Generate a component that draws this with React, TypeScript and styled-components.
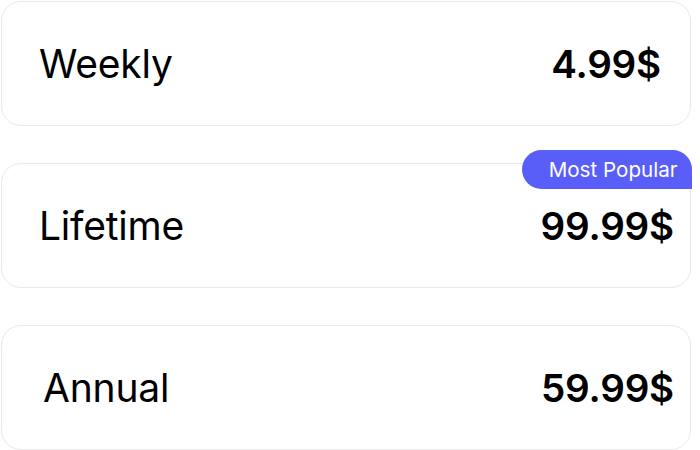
import React from 'react';
import styled, { createGlobalStyle } from 'styled-components';

interface Plan {
  name: string;
  price: string;
  badge?: string;
  padLeft: number;
  padRight: number;
}

const plans: Plan[] = [
  { name: 'Weekly', price: '4.99$', padLeft: 37, padRight: 29 },
  { name: 'Lifetime', price: '99.99$', badge: 'Most Popular', padLeft: 37, padRight: 16 },
  { name: 'Annual', price: '59.99$', padLeft: 41, padRight: 16 },
];

const GlobalStyle = createGlobalStyle`
  html, body {
    margin: 0;
    padding: 0;
    background: #ffffff;
  }
  body {
    font-family: Inter, "Noto Sans", sans-serif;
    color: #000000;
  }
`;

export default function App() {
  return (
    <>
      <GlobalStyle />
      <List>
        {plans.map((p) => (
          <Card key={p.name} $padLeft={p.padLeft} $padRight={p.padRight}>
            <Label>{p.name}</Label>
            <Price>{p.price}</Price>
            {p.badge && <Badge>{p.badge}</Badge>}
          </Card>
        ))}
      </List>
    </>
  );
}

const List = styled.div`
  display: flex;
  flex-direction: column;
  gap: 37px;
  width: 691px;
  padding: 1px 0 0 1px;
  box-sizing: border-box;
`;

const Card = styled.div<{ $padLeft: number; $padRight: number }>`
  position: relative;
  display: flex;
  align-items: center;
  justify-content: space-between;
  height: 125px;
  padding: 0 ${(p) => p.$padRight}px 0 ${(p) => p.$padLeft}px;
  box-sizing: border-box;
  border: 1.5px solid #e9e9e9;
  border-radius: 20px;
  background: #ffffff;
`;

const Label = styled.span`
  font-size: 39px;
  font-weight: 400;
  letter-spacing: -0.2px;
`;

const Price = styled.span`
  font-size: 38.6px;
  font-weight: 600;
  letter-spacing: -0.2px;
`;

const Badge = styled.div`
  position: absolute;
  top: -14px;
  right: -1.5px;
  height: 39px;
  display: flex;
  align-items: center;
  padding: 0 14px 0 27px;
  background: #585ef7;
  color: #ffffff;
  font-size: 20.6px;
  font-weight: 400;
  border-radius: 20px 20px 0 20px;
`;
